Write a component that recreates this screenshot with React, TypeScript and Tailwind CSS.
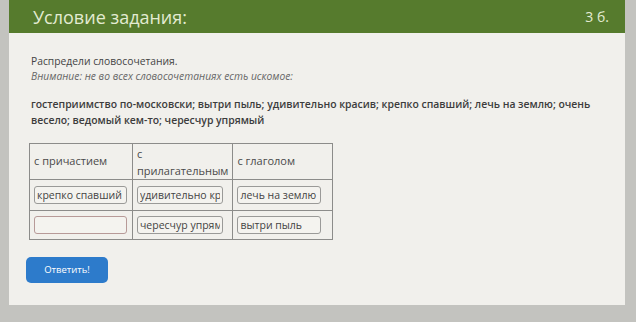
import React from 'react';

const words =
  'гостеприимство по-московски; вытри пыль; удивительно красив; крепко спавший; лечь на землю; очень весело; ведомый кем-то; чересчур упрямый';

interface Cell {
  value: string;
  width: string;
  empty?: boolean;
}

const rows: Cell[][] = [
  [
    { value: 'крепко спавший', width: 'w-[93px]' },
    { value: 'удивительно красив', width: 'w-[86px]' },
    { value: 'лечь на землю', width: 'w-[84px]' },
  ],
  [
    { value: '', width: 'w-[93px]', empty: true },
    { value: 'чересчур упрямый', width: 'w-[86px]' },
    { value: 'вытри пыль', width: 'w-[84px]' },
  ],
];

export default function App() {
  return (
    <div className="w-[636px] h-[322px] overflow-hidden bg-[#c3c3bf] pl-[9px] pr-[11px] font-['Open_Sans',sans-serif]">
      <div className="bg-[#f1f0ec] h-[305px] flex flex-col">
        {/* Header */}
        <div className="h-[33px] bg-[#567b2d] flex items-center justify-between pl-[24px] pr-[16px] text-[#e3ebd2]">
          <span className="text-[18px] leading-none">Условие задания:</span>
          <span className="text-[14px] leading-none">3 б.</span>
        </div>

        <div className="pl-[22px] pt-[21px] flex-1">
          <p className="text-[10.3px] leading-[15px] text-[#444]">Распредели словосочетания.</p>
          <p className="text-[10.3px] leading-[15px] italic text-[#666]">
            Внимание: не во всех словосочетаниях есть искомое:
          </p>

          <p className="mt-[12px] w-[570px] text-[10.4px] leading-[16px] font-semibold text-[#3c3c3c]">{words}</p>

          {/* Table */}
          <table className="mt-[15px] border-collapse text-[11px] text-[#4a4a4a] ml-[-2px]">
            <thead>
              <tr className="h-[36px]">
                <th className="w-[103px] border border-[#8c8c8a] px-[4px] text-left font-normal align-middle">
                  с причастием
                </th>
                <th className="w-[98px] border border-[#8c8c8a] px-[4px] text-left font-normal align-middle leading-[17px]">
                  с
                  <br />
                  прилагательным
                </th>
                <th className="w-[100px] border border-[#8c8c8a] px-[4px] text-left font-normal align-middle">
                  с глаголом
                </th>
              </tr>
            </thead>
            <tbody>
              {rows.map((row, i) => (
                <tr key={i} className={i === 0 ? 'h-[31px]' : 'h-[29px]'}>
                  {row.map((cell, j) => (
                    <td key={j} className="border border-[#8c8c8a] px-[4px] align-middle">
                      <input
                        readOnly
                        value={cell.value}
                        className={`${cell.width} h-[18px] block rounded-[3px] border bg-[#f4f3ef] px-[2px] text-[10.5px] text-[#444] outline-none ${
                          cell.empty ? 'border-[#b79a98]' : 'border-[#9a9a98]'
                        }`}
                      />
                    </td>
                  ))}
                </tr>
              ))}
            </tbody>
          </table>

          <button className="block mt-[17px] ml-[-5px] w-[82px] h-[26px] rounded-[5px] bg-[#2d7bcb] text-white text-[9.5px]">
            Ответить!
          </button>
        </div>
      </div>
    </div>
  );
}
